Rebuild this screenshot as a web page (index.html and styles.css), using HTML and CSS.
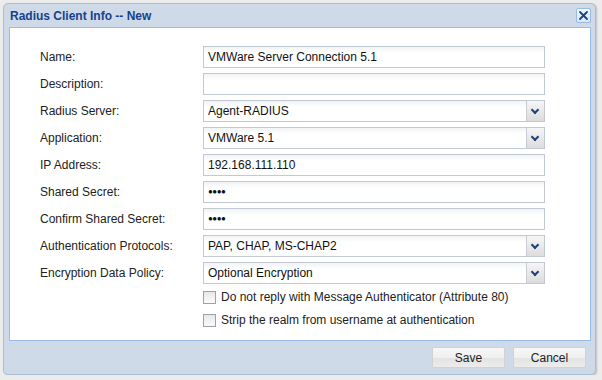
FILE: index.html
```html
<!DOCTYPE html>
<html lang="en">
<head>
<meta charset="UTF-8">
<title>Radius Client Info -- New</title>
<link rel="stylesheet" href="styles.css">
</head>
<body>
<div class="window">
    <div class="header">
        <span class="title">Radius Client Info -- New</span>
        <span class="close">
            <svg width="11" height="11" viewBox="0 0 11 11"><path d="M2 2 L9 9 M9 2 L2 9" stroke="#15428b" stroke-width="1.8" stroke-linecap="round"/></svg>
        </span>
    </div>
    <div class="body">
        <div class="form">
            <label>Name:</label>
            <div class="field">VMWare Server Connection 5.1</div>

            <label>Description:</label>
            <div class="field"></div>

            <label>Radius Server:</label>
            <div class="field combo">Agent-RADIUS<span class="trigger"></span></div>

            <label>Application:</label>
            <div class="field combo">VMWare 5.1<span class="trigger"></span></div>

            <label>IP Address:</label>
            <div class="field">192.168.111.110</div>

            <label>Shared Secret:</label>
            <div class="field secret">&#9679;&#9679;&#9679;&#9679;</div>

            <label>Confirm Shared Secret:</label>
            <div class="field secret">&#9679;&#9679;&#9679;&#9679;</div>

            <label>Authentication Protocols:</label>
            <div class="field combo">PAP, CHAP, MS-CHAP2<span class="trigger"></span></div>

            <label>Encryption Data Policy:</label>
            <div class="field combo">Optional Encryption<span class="trigger"></span></div>
        </div>
        <div class="checks">
            <div class="check"><span class="box"></span>Do not reply with Message Authenticator (Attribute 80)</div>
            <div class="check"><span class="box"></span>Strip the realm from username at authentication</div>
        </div>
    </div>
    <div class="footer">
        <button class="btn">Save</button>
        <button class="btn">Cancel</button>
    </div>
</div>
</body>
</html>
```
FILE: styles.css
```css
/* dialog styles */
body {
    margin: 0;
    padding: 3px 0 0 3px;
    background-color: #ececec;
    font-family: "Liberation Sans", Arial, sans-serif;
    font-size: 12px;
    color: #222;
}

.window {
    width: 591px;
    height: 370px;
    border: 1px solid #a9bfd6;
    border-radius: 5px;
    background-color: #cedae7;
    box-shadow: 1px 1px 2px rgba(0, 0, 0, 0.2);
    display: flex;
    flex-direction: column;
}

.header {
    height: 23px;
    display: flex;
    align-items: center;
    justify-content: space-between;
    padding: 0 4px 0 6px;
}

.title {
    font-weight: bold;
    color: #15428b;
    font-size: 12px;
}

.close {
    width: 13px;
    height: 13px;
    border: 1px solid #99bbe8;
    border-radius: 2px;
    background: linear-gradient(#f4f8fd, #dbe6f3);
    display: flex;
    align-items: center;
    justify-content: center;
}

.body {
    box-sizing: border-box;
    margin: 0 4px 0 5px;
    height: 314px;
    background-color: #fff;
    border: 1px solid #99bbe8;
    padding: 18px 0 0 30px;
}

.form {
    display: grid;
    grid-template-columns: 163px 342px;
    row-gap: 5px;
    align-items: center;
}

.form label {
    color: #222;
}

.field {
    height: 20px;
    line-height: 20px;
    border: 1px solid #c2c9d3;
    background: linear-gradient(#f1f3f6, #fff 6px);
    padding-left: 4px;
    position: relative;
    color: #111;
}

.secret {
    font-size: 8px;
    letter-spacing: -0.5px;
}

.trigger {
    position: absolute;
    right: 0;
    top: 0;
    width: 17px;
    height: 20px;
    border-left: 1px solid #c8ccd2;
    background: linear-gradient(#f6f6f6, #dcdcdc);
}

.trigger::after {
    content: "";
    position: absolute;
    left: 5px;
    top: 6px;
    width: 4px;
    height: 4px;
    border-right: 2px solid #1f3f7a;
    border-bottom: 2px solid #1f3f7a;
    transform: rotate(45deg);
}

.checks {
    margin: 6px 0 0 163px;
    display: flex;
    flex-direction: column;
    gap: 9px;
}

.check {
    display: flex;
    align-items: center;
    height: 14px;
}

.box {
    width: 11px;
    height: 11px;
    border: 1px solid #9aa3ad;
    background: linear-gradient(#e8e8e8, #fafafa);
    margin-right: 5px;
}

.footer {
    flex: 1;
    display: flex;
    justify-content: flex-end;
    align-items: center;
    gap: 8px;
    padding-right: 9px;
}

.btn {
    width: 73px;
    height: 21px;
    border: 1px solid #d2d2d2;
    border-radius: 2px;
    background: linear-gradient(#f7f7f7, #f0f0f0 50%, #e2e2e2 50%, #ececec);
    font-family: "Liberation Sans", Arial, sans-serif;
    font-size: 12px;
    color: #222;
    padding: 0;
}
```
